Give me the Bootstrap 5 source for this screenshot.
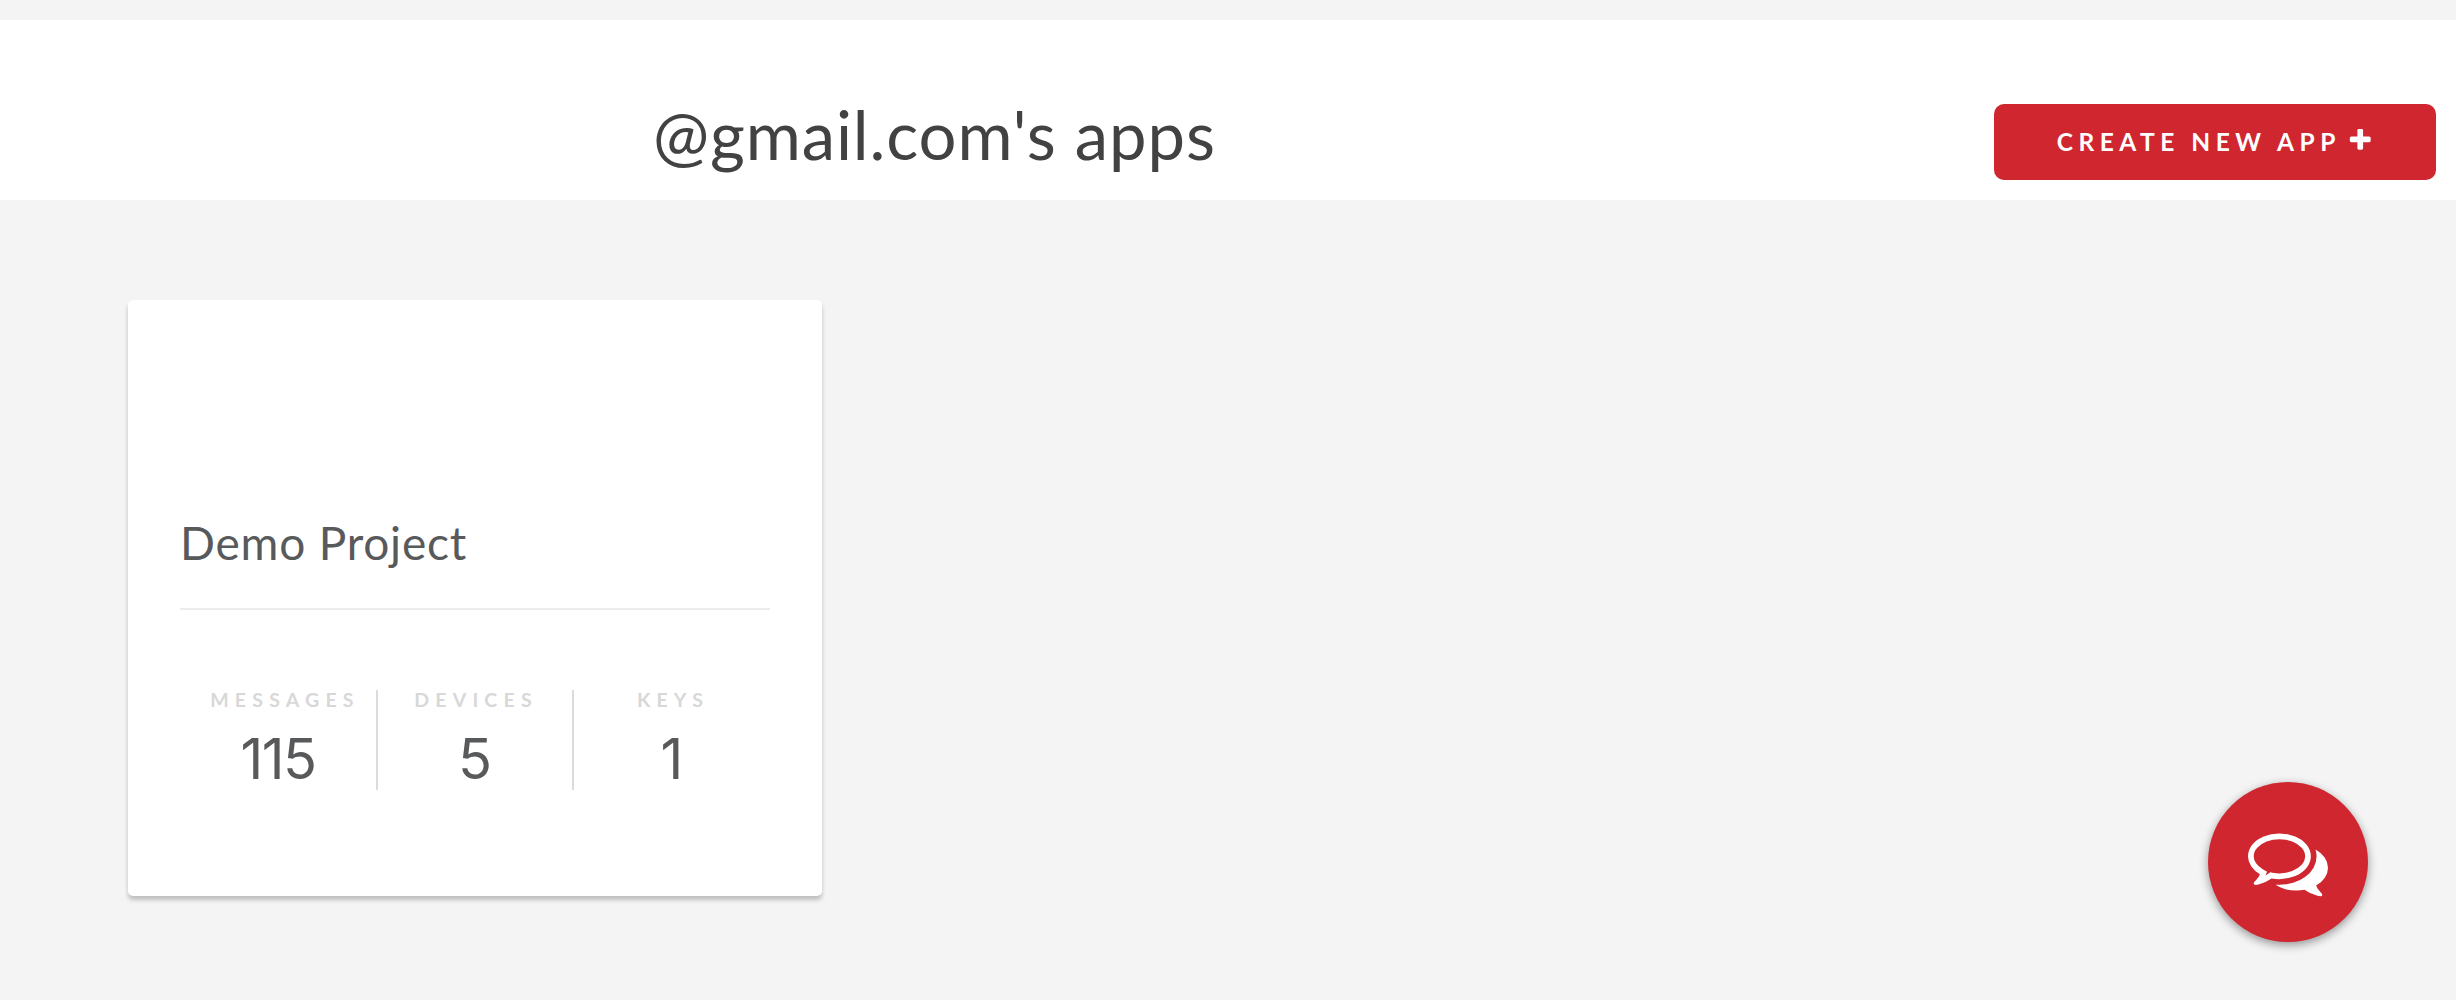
<!DOCTYPE html>
<html lang="en">
<head>
<meta charset="utf-8">
<meta name="viewport" content="width=device-width, initial-scale=1">
<title>Apps</title>
<link href="https://cdn.jsdelivr.net/npm/bootstrap@5.3.0/dist/css/bootstrap.min.css" rel="stylesheet">
<style>
body{background:#f4f4f4;font-family:Lato,"Open Sans",sans-serif;min-height:1000px;overflow:hidden}
.page-head{margin-top:20px;height:180px;padding:0 20px 20px 653px}
.page-title{font-size:67px;line-height:76px;font-weight:400;color:#424242;letter-spacing:.9px;white-space:nowrap;padding-bottom:8px}
.btn-create{width:442px;height:76px;border-radius:10px;background:#cf2630;color:#fff;font-size:24.5px;font-weight:700;letter-spacing:5.5px;padding:0}
.btn-create:hover{background:#b8212a;color:#fff}
.btn-create svg{width:26.5px;height:26.5px;margin:-3px 0 0 6px}
.app-card{width:694px;height:596px;margin:100px 0 0 128px;border:0;border-radius:5px;box-shadow:0 4px 4px rgba(0,0,0,.22);padding:0 52px}
.app-name{margin-top:213px;font-size:46px;line-height:60px;font-weight:400;color:#58595b;letter-spacing:.8px}
.rule{height:2px;background:#ececec;margin-top:35px}
.stats{margin-top:80px;height:100px}
.stat{width:196px;border-right:2px solid #dcdcdc;color:#58595b}
.stat:first-child{width:198px}
.stat:last-child{border-right:0}
.stat-label{font-size:19.5px;line-height:20px;font-weight:700;letter-spacing:6.2px;color:#d8d8d8;padding-left:2px}
.s-msg{padding-left:14px}
.stat-num{font-family:Inter,Roboto,sans-serif;font-size:56px;line-height:63px;margin-top:18px}
.n-msg{letter-spacing:-1.5px}
.chat{right:88px;top:782px;width:160px;height:160px;background:#cf2630;box-shadow:0 3px 10px rgba(0,0,0,.4)}
.chat svg{width:80px;height:80px}
</style>
<script src="https://cdn.jsdelivr.net/npm/bootstrap@5.3.0/dist/js/bootstrap.bundle.min.js"></script>
</head>
<body>
<header class="page-head bg-white d-flex justify-content-between align-items-end">
  <h1 class="page-title mb-0">@gmail.com's apps</h1>
  <button type="button" class="btn btn-create d-flex align-items-center justify-content-center"><span>CREATE NEW APP</span><svg viewBox="0 0 1792 1792" fill="currentColor" aria-hidden="true"><path d="M1600 736v192q0 40-28 68t-68 28h-416v416q0 40-28 68t-68 28h-192q-40 0-68-28t-28-68v-416h-416q-40 0-68-28t-28-68v-192q0-40 28-68t68-28h416v-416q0-40 28-68t68-28h192q40 0 68 28t28 68v416h416q40 0 68 28t28 68z"/></svg></button>
</header>
<main>
  <article class="card app-card">
    <h2 class="app-name mb-0">Demo Project</h2>
    <div class="rule"></div>
    <div class="stats d-flex text-center">
      <div class="stat"><div class="stat-label s-msg">MESSAGES</div><div class="stat-num n-msg">115</div></div>
      <div class="stat"><div class="stat-label">DEVICES</div><div class="stat-num">5</div></div>
      <div class="stat"><div class="stat-label">KEYS</div><div class="stat-num">1</div></div>
    </div>
  </article>
</main>
<a href="#" class="chat position-fixed rounded-circle d-flex align-items-center justify-content-center text-white" aria-label="Chat"><svg viewBox="0 0 1792 1792" fill="currentColor"><path d="M704 384q-153 0-286 52t-211.5 141-78.5 191q0 82 53 158t149 132l97 56-35 84q34-20 62-39l44-31 53 10q78 14 153 14 153 0 286-52t211.5-141 78.5-191-78.5-191-211.5-141-286-52zm0-128q191 0 353.5 68.5t256.5 186.5 94 257-94 257-256.5 186.5-353.5 68.5q-86 0-176-16-124 88-278 128-36 9-86 16h-3q-11 0-20.5-8t-11.5-21q-1-3-1-6.5t.5-6.5 2-6l2.5-5 3.5-5.5 4-5 4.5-5 4-4.5q5-6 23-25t26-29.5 22.5-29 25-38.5 20.5-44q-124-72-195-177t-71-224q0-139 94-257t256.5-186.5 353.5-68.5zm822 1169q10 24 20.5 44t25 38.5 22.5 29 26 29.5 23 25q1 1 4 4.5t4.5 5 4 5 3.5 5.5l2.5 5 2 6 .5 6.5-1 6.5q-3 14-13 22t-22 7q-50-7-86-16-154-40-278-128-90 16-176 16-271 0-472-132 58 4 88 4 161 0 309-45t264-129q125-92 192-212t67-254q0-77-23-152 129 71 204 178t75 230q0 120-71 224.5t-195 176.5z"/></svg></a>
</body>
</html>
